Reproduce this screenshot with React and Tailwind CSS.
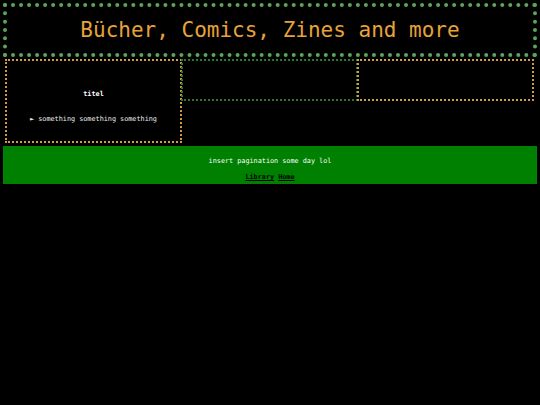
import React from 'react';

function Card({ color, className = '', children }) {
  return (
    <div className={`w-[177px] shrink-0 border-2 border-dotted ${color} ${className}`}>
      {children}
    </div>
  );
}

export default function App() {
  return (
    <div className="min-h-screen bg-black p-[3px] font-['DejaVu_Sans_Mono',monospace]">
      {/* Header */}
      <header className="h-[54px] border-4 border-dotted border-[#5aa55a] flex items-center justify-center">
        <h1 className="text-[21px] leading-none text-[#e8a23a]">Bücher, Comics, Zines and more</h1>
      </header>

      {/* Cards */}
      <div className="flex items-start px-[2px] mt-[2px]">
        <Card color="border-[#d39a45]" className="h-[84px] text-[#eeeeee] text-[6.8px] leading-[10px] text-center">
          <div className="pt-[28px] font-bold text-white">titel</div>
          <div className="mt-[15px]">► something something something</div>
        </Card>
        <Card color="border-[#2b7a2b]" className="h-[42px] -ml-px" />
        <Card color="border-[#d39a45]" className="h-[42px] -ml-px" />
      </div>

      {/* Footer */}
      <footer className="mt-[3px] h-[38px] bg-[#008000] flex flex-col items-center pt-[10px] text-[6.8px] leading-[10px]">
        <p className="text-white">insert pagination some day lol</p>
        <p className="mt-[6px] text-black font-bold">
          <a href="#" className="underline">Library</a> <a href="#" className="underline">Home</a>
        </p>
      </footer>
    </div>
  );
}
